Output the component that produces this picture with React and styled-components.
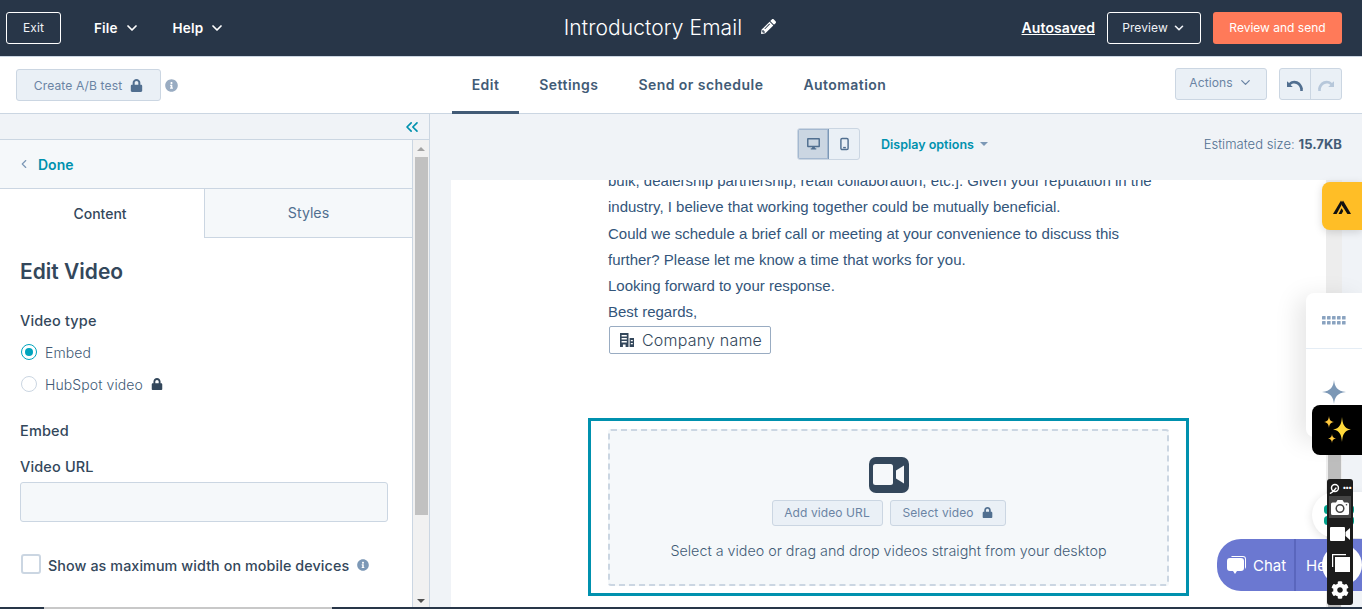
import React from 'react';
import styled, { createGlobalStyle } from 'styled-components';
import { ChevronDown, ChevronLeft, ChevronsLeft } from 'lucide-react';
import { FaLock, FaPencilAlt, FaInfoCircle, FaCog } from 'react-icons/fa';

const GlobalStyle = createGlobalStyle`
  html, body {
    margin: 0;
    height: 100%;
    overflow: hidden;
  }
  body {
    font-family: "Inter", "Open Sans", sans-serif;
    color: #33475b;
    background: #fff;
  }
  * {
    box-sizing: border-box;
  }
`;

const Page = styled.div`
  position: relative;
  width: 1362px;
  height: 609px;
  display: flex;
  flex-direction: column;
  overflow: hidden;
`;

const TopBar = styled.header`
  height: 57px;
  flex: none;
  display: grid;
  grid-template-columns: 1fr auto 1fr;
  align-items: center;
  padding: 0 20px 1px 6px;
  background: #283648;
  border-bottom: 1px solid #cbd6e2;
  color: #fff;
`;

const TopLeft = styled.div`
  display: flex;
  align-items: center;
`;

const TopRight = styled.div`
  display: flex;
  align-items: center;
  justify-content: flex-end;
`;

const OutlineButton = styled.button`
  height: 32px;
  width: ${({ $w }) => $w}px;
  display: flex;
  align-items: center;
  justify-content: center;
  gap: 4px;
  font: 400 12px "Inter", sans-serif;
  letter-spacing: 0.1px;
  color: #f0f3f7;
  background: transparent;
  border: 1px solid #fff;
  border-radius: 3px;
  padding: 0;
`;

const MenuItem = styled.div`
  display: flex;
  align-items: center;
  gap: 6px;
  margin-left: ${({ $ml }) => $ml}px;
  font-size: 13.5px;
  font-weight: 600;
  letter-spacing: 0.15px;
  color: #fff;
`;

const TitleRow = styled.div`
  display: flex;
  align-items: center;
  gap: 19px;
  margin-left: -8px;
  font-size: 21px;
  font-weight: 300;
  letter-spacing: 0.1px;
  color: #fff;
  svg {
    margin-top: -2px;
  }
`;

const Autosaved = styled.span`
  font-size: 14px;
  font-weight: 600;
  letter-spacing: 0.1px;
  text-decoration: underline;
  margin-right: 12px;
`;

const SendButton = styled.button`
  width: 129px;
  height: 32px;
  margin-left: 12px;
  font: 400 12px "Inter", sans-serif;
  color: #fff;
  background: #ff7a59;
  border: none;
  border-radius: 3px;
  padding: 0;
`;

const SubBar = styled.div`
  height: 57px;
  flex: none;
  display: grid;
  grid-template-columns: 1fr auto 1fr;
  padding: 0 20px 0 16px;
  background: #fff;
  border-bottom: 1px solid #cbd6e2;
`;

const SubLeft = styled.div`
  display: flex;
  align-items: center;
  gap: 4px;
`;

const SubRight = styled.div`
  display: flex;
  justify-content: flex-end;
  gap: 12px;
  padding-top: 11px;
`;

const MutedButton = styled.button`
  height: ${({ $h }) => $h || 32}px;
  width: ${({ $w }) => ($w ? `${$w}px` : 'auto')};
  display: flex;
  align-items: center;
  justify-content: center;
  gap: ${({ $gap }) => $gap || 8}px;
  padding: 0 0 ${({ $pb }) => $pb || 0}px;
  font: 400 ${({ $fs }) => $fs || 12}px "Inter", sans-serif;
  letter-spacing: 0.1px;
  color: #6a84a4;
  background: #eaf0f6;
  border: 1px solid #cbd6e2;
  border-radius: 3px;
`;

const Tabs = styled.nav`
  display: flex;
  align-items: stretch;
  gap: 40px;
  margin-bottom: -1px;
`;

const Tab = styled.div`
  display: flex;
  align-items: center;
  padding: 1px ${({ $active }) => ($active ? '20px' : '0')} 0;
  margin: 0 ${({ $active }) => ($active ? '-20px' : '0')};
  font-size: 14px;
  font-weight: 600;
  letter-spacing: 0.45px;
  color: #425b76;
  border-bottom: 3px solid ${({ $active }) => ($active ? '#425b76' : 'transparent')};
`;

const UndoGroup = styled.div`
  display: flex;
  height: 32px;
  width: 63px;
  background: #eaf0f6;
  border: 1px solid #cbd6e2;
  border-radius: 3px;
`;

const UndoCell = styled.div`
  flex: 1;
  display: flex;
  align-items: center;
  justify-content: center;
  padding-top: 3px;
  & + & {
    border-left: 1px solid #cbd6e2;
  }
  svg {
    transform: ${({ $off }) => ($off ? 'scaleX(-1)' : 'none')};
  }
`;

const Main = styled.div`
  flex: 1;
  min-height: 0;
  display: flex;
`;

const Sidebar = styled.aside`
  width: 430px;
  flex: none;
  display: flex;
  flex-direction: column;
  background: #f0f3f7;
  border-right: 1px solid #cbd6e2;
`;

const CollapseRow = styled.div`
  height: 26px;
  flex: none;
  display: flex;
  align-items: center;
  justify-content: flex-end;
  padding-right: 7px;
  color: #0091ae;
  border-bottom: 1px solid #cbd6e2;
`;

const SidebarBody = styled.div`
  flex: 1;
  min-height: 0;
  display: flex;
`;

const Panel = styled.div`
  width: 413px;
  display: flex;
  flex-direction: column;
  background: #fff;
  border-right: 1px solid #cbd6e2;
`;

const DoneRow = styled.div`
  height: 49px;
  flex: none;
  display: flex;
  align-items: center;
  gap: 7px;
  padding-left: 17px;
  font-size: 14px;
  font-weight: 600;
  color: #0091ae;
  background: #f5f8fa;
  border-bottom: 1px solid #cbd6e2;
  svg {
    color: #7c98b6;
  }
`;

const PanelTabs = styled.div`
  height: 49px;
  flex: none;
  display: flex;
`;

const PanelTab = styled.div`
  width: ${({ $active }) => ($active ? '204px' : '208px')};
  display: flex;
  align-items: center;
  justify-content: center;
  padding: 0 ${({ $active }) => ($active ? '4px' : '0')} 1px 0;
  font-size: ${({ $active }) => ($active ? '14px' : '14.2px')};
  font-weight: ${({ $active }) => ($active ? 500 : 400)};
  color: ${({ $active }) => ($active ? '#33475b' : '#516f90')};
  background: ${({ $active }) => ($active ? '#fff' : '#f5f8fa')};
  border-bottom: ${({ $active }) => ($active ? 'none' : '1px solid #cbd6e2')};
  border-left: ${({ $active }) => ($active ? 'none' : '1px solid #cbd6e2')};
`;

const PanelContent = styled.div`
  flex: 1;
  display: flex;
  flex-direction: column;
  padding: 0 24px 0 20px;
`;

const Heading = styled.h2`
  margin: 21px 0 0;
  font-size: 21px;
  line-height: 26px;
  font-weight: 600;
  color: #33475b;
`;

const FieldLabel = styled.div`
  margin-top: ${({ $mt }) => $mt}px;
  font-size: 14.5px;
  line-height: 18px;
  font-weight: 500;
  letter-spacing: 0.15px;
  color: #33475b;
`;

const RadioRow = styled.div`
  display: flex;
  align-items: center;
  height: 16px;
  margin-top: ${({ $mt }) => $mt}px;
  font-size: 14px;
  font-weight: 300;
  letter-spacing: 0.1px;
  color: #425b76;
  svg {
    margin-left: 8px;
  }
`;

const Radio = styled.span`
  width: 16px;
  height: 16px;
  flex: none;
  margin: 0 8px 0 1px;
  border-radius: 50%;
  border: 1px solid ${({ $on }) => ($on ? '#00a4bd' : '#cbd6e2')};
  background: #fff;
  display: flex;
  align-items: center;
  justify-content: center;
  &::after {
    content: '';
    display: ${({ $on }) => ($on ? 'block' : 'none')};
    width: 8px;
    height: 8px;
    border-radius: 50%;
    background: #00a4bd;
  }
`;

const UrlInput = styled.div`
  height: 40px;
  margin-top: 6px;
  background: #f5f8fa;
  border: 1px solid #cbd6e2;
  border-radius: 3px;
`;

const CheckRow = styled.div`
  display: flex;
  align-items: center;
  margin-top: 34px;
  font-size: 14.3px;
  font-weight: 500;
  letter-spacing: 0.1px;
  white-space: nowrap;
  color: #33475b;
`;

const Checkbox = styled.span`
  width: 20px;
  height: 20px;
  flex: none;
  margin: -2px 7px 0 1px;
  background: #fff;
  border: 2px solid #cbd6e2;
  border-radius: 3px;
`;

const InfoDot = styled.span`
  display: inline-flex;
  margin-left: ${({ $ml }) => $ml}px;
  color: ${({ $c }) => $c || '#7c98b6'};
`;

const Scrollbar = styled.div`
  width: 16px;
  flex: none;
  display: flex;
  flex-direction: column;
  align-items: center;
  background: #f1f1f1;
`;

const ScrollArrow = styled.span`
  height: 17px;
  flex: none;
  display: flex;
  align-items: center;
  justify-content: center;
  &::before {
    content: '';
    border-left: 4px solid transparent;
    border-right: 4px solid transparent;
    ${({ $down }) => ($down ? 'border-top' : 'border-bottom')}: 4px solid ${({ $down }) => ($down ? '#505050' : '#a3a3a3')};
  }
`;

const ScrollThumb = styled.div`
  width: 13px;
  height: 358px;
  background: #c1c1c1;
`;

const ScrollGap = styled.div`
  flex: 1;
`;

const Workspace = styled.section`
  flex: 1;
  min-width: 0;
  display: flex;
  flex-direction: column;
  background: #f0f3f7;
`;

const ViewBar = styled.div`
  height: 66px;
  flex: none;
  display: flex;
  align-items: center;
  padding: 0 20px 6px 367px;
`;

const ViewToggle = styled.div`
  display: flex;
  width: 63px;
  height: 32px;
  background: #eaf0f6;
  border: 1px solid #cbd6e2;
  border-radius: 3px;
  overflow: hidden;
`;

const ViewCell = styled.div`
  flex: 1;
  display: flex;
  align-items: center;
  justify-content: center;
  background: ${({ $on }) => ($on ? '#cbd6e2' : 'transparent')};
  border-right: ${({ $on }) => ($on ? '1px solid #7c98b6' : 'none')};
  box-shadow: ${({ $on }) => ($on ? 'inset 0 0 0 1px #a4b8d0' : 'none')};
`;

const DisplayOptions = styled.div`
  display: flex;
  align-items: center;
  gap: 6px;
  margin-left: 21px;
  font-size: 12.5px;
  font-weight: 600;
  color: #0091ae;
  &::after {
    content: '';
    border-left: 4px solid transparent;
    border-right: 4px solid transparent;
    border-top: 4px solid #7c98b6;
  }
`;

const SizeNote = styled.div`
  margin-left: auto;
  font-size: 13px;
  font-weight: 300;
  letter-spacing: 0.05px;
  color: #516f90;
  b {
    font-weight: 700;
    color: #425b76;
  }
`;

const CanvasRow = styled.div`
  flex: 1;
  min-height: 0;
  display: flex;
  padding-left: 21px;
`;

const Canvas = styled.div`
  width: 875px;
  flex: none;
  overflow: hidden;
  background: #fff;
  padding: 0 137px;
`;

const CanvasTrack = styled.div`
  width: 16px;
  flex: none;
  display: flex;
  justify-content: center;
  padding-top: 200px;
  background: #ededed;
`;

const CanvasThumb = styled.div`
  width: 13px;
  height: 100%;
  background: #bdbdbd;
`;

const Letter = styled.div`
  margin-top: -12px;
  padding-left: 20px;
  font: 15px/26.3px "Liberation Sans", Arial, sans-serif;
  white-space: nowrap;
  color: #33557a;
  p {
    margin: 0;
  }
`;

const TokenChip = styled.div`
  width: 162px;
  height: 28px;
  margin-left: 1px;
  display: flex;
  align-items: center;
  gap: 7px;
  padding-left: 9px;
  font-family: "Inter", sans-serif;
  font-size: 16px;
  font-weight: 300;
  letter-spacing: 0.2px;
  color: #33475b;
  background: #fff;
  border: 1px solid #99acc2;
  border-radius: 2px;
`;

const VideoModule = styled.div`
  height: 178px;
  margin-top: 64px;
  padding: 8px 17px;
  background: #fff;
  border: 3px solid #0091ae;
`;

const DropZone = styled.div`
  height: 157px;
  display: flex;
  flex-direction: column;
  align-items: center;
  padding-top: 26px;
  background: #f5f8fa;
  border: 2px dashed #cbd6e2;
  border-radius: 3px;
`;

const DropButtons = styled.div`
  display: flex;
  gap: 7px;
  margin-top: 7px;
`;

const DropHint = styled.div`
  margin-top: 16px;
  font-size: 14.3px;
  font-weight: 300;
  white-space: nowrap;
  color: #425b76;
`;

const Floating = styled.div`
  position: absolute;
  left: ${({ $x }) => $x}px;
  top: ${({ $y }) => $y}px;
  width: ${({ $w }) => $w}px;
  height: ${({ $h }) => $h}px;
`;

const YellowTab = styled(Floating)`
  display: flex;
  align-items: center;
  justify-content: center;
  background: #ffbe26;
  border-radius: 8px 0 0 8px;
  box-shadow: 0 2px 8px rgba(0, 0, 0, 0.15);
`;

const SideTools = styled(Floating)`
  display: flex;
  flex-direction: column;
  background: #fff;
  border-radius: 8px 0 0 8px;
  box-shadow: -8px 4px 24px rgba(0, 0, 0, 0.1);
`;

const ToolCell = styled.div`
  height: ${({ $h }) => $h}px;
  display: flex;
  align-items: ${({ $align }) => $align || 'center'};
  justify-content: center;
  padding-top: ${({ $pt }) => $pt || 0}px;
  border-bottom: ${({ $line }) => ($line ? '1px solid #e5edf5' : 'none')};
`;

const SparkTab = styled(Floating)`
  display: flex;
  align-items: center;
  justify-content: center;
  background: #000;
  border-radius: 8px 0 0 8px;
`;

const RoundBubble = styled(Floating)`
  display: flex;
  align-items: center;
  padding-left: 12px;
  background: #fff;
  border-radius: 24px 0 0 24px;
  box-shadow: 0 2px 10px rgba(0, 0, 0, 0.12);
`;

const ChatPill = styled(Floating)`
  display: flex;
  align-items: center;
  overflow: hidden;
  color: #fff;
  font-size: 15px;
  font-weight: 400;
  background: #6b78d1;
  border-radius: 24px 0 0 24px;
`;

const ChatPart = styled.div`
  height: 100%;
  display: flex;
  align-items: center;
  gap: 6px;
  padding-left: ${({ $pl }) => $pl}px;
  width: ${({ $w }) => $w}px;
  flex: none;
  border-right: ${({ $line }) => ($line ? '2px solid #5a66bd' : 'none')};
`;

const WhiteDisc = styled(Floating)`
  background: #fff;
  border-radius: 50%;
`;

const RecorderBar = styled(Floating)`
  display: flex;
  flex-direction: column;
  align-items: center;
  background: #1c1c1c;
  border-radius: 3px;
  color: #fff;
`;

const RecorderTop = styled.div`
  height: 17px;
  width: 100%;
  flex: none;
  display: flex;
  align-items: center;
  justify-content: center;
  gap: 3px;
  padding-top: 1px;
`;

const Dots = styled.span`
  font-size: 7px;
  line-height: 8px;
  letter-spacing: -0.5px;
  font-weight: 700;
`;

const RecorderCell = styled.div`
  width: 22px;
  height: ${({ $h }) => $h}px;
  flex: none;
  display: flex;
  align-items: center;
  justify-content: center;
  background: ${({ $on }) => ($on ? '#444' : 'transparent')};
`;

const BottomStrip = styled.div`
  position: absolute;
  left: 0;
  bottom: 0;
  width: 100%;
  height: 2px;
  background: #283648;
`;

const BottomThumb = styled.div`
  width: 288px;
  height: 100%;
  margin-left: 44px;
  background: #c8c8c8;
`;

const Lock = ({ size = 12, color = '#516f90' }) => <FaLock size={size} color={color} />;

const UndoArrow = ({ color }) => (
  <svg width="16" height="11" viewBox="0 0 16 11" fill={color}>
    <path d="M0 1.2V7h5.8L3.6 4.9C4.7 4 6 3.5 7.3 3.5c2.9 0 5.1 2.2 6 5.5l2.5-.8C14.7 3.8 11.6.8 7.3.8 5.3.8 3.5 1.6 2.1 3.1z" />
    <rect x="13.2" y="8" width="2.6" height="3" />
  </svg>
);

const ClusterIcon = () => (
  <svg width="26" height="12" viewBox="0 0 26 12" fill="#8aa3c0">
    {[0, 1].flatMap(r => [0, 1, 2, 3, 4].map(c => <rect key={`${r}${c}`} x={1 + c * 5} y={1 + r * 5} width="3.6" height="3.6" rx="0.6" />))}
  </svg>
);

const STAR = 'M12 0C12.8 7 15 11 24 12C15 13 12.8 17 12 24C11.2 17 9 13 0 12C9 11 11.2 7 12 0Z';

const Sparkle = ({ w, h = w, color, x = 0, y = 0 }) => (
  <path transform={`translate(${x} ${y}) scale(${w / 24} ${h / 24})`} fill={color} d={STAR} />
);

const CompanyIcon = () => (
  <svg width="16" height="16" viewBox="0 0 16 16" fill="#33475b">
    <path d="M1 1h8.5v14H6.6v-2.6H3.9V15H1zM2.6 3v1.5h5.2V3zm0 3v1.5h5.2V6zm0 3v1.5h5.2V9z" fillRule="evenodd" />
    <path d="M10.6 6H15v9h-4.4zM11.8 8v1.3h2V8zm0 3v1.3h2V11z" fillRule="evenodd" />
  </svg>
);

const App = () => (
  <>
    <GlobalStyle />
    <Page>
      <TopBar>
        <TopLeft>
          <OutlineButton $w={55}>Exit</OutlineButton>
          <MenuItem $ml={33}>
            File <ChevronDown size={16} strokeWidth={2.6} />
          </MenuItem>
          <MenuItem $ml={33}>
            Help <ChevronDown size={16} strokeWidth={2.6} />
          </MenuItem>
        </TopLeft>
        <TitleRow>
          Introductory Email <FaPencilAlt size={15} />
        </TitleRow>
        <TopRight>
          <Autosaved>Autosaved</Autosaved>
          <OutlineButton $w={94}>
            Preview <ChevronDown size={14} strokeWidth={2.8} />
          </OutlineButton>
          <SendButton>Review and send</SendButton>
        </TopRight>
      </TopBar>

      <SubBar>
        <SubLeft>
          <MutedButton $w={145} $fs={12.1}>
            Create A/B test <Lock size={13} color="#516f90" />
          </MutedButton>
          <InfoDot $ml={0} $c="#99acc2">
            <FaInfoCircle size={13} />
          </InfoDot>
        </SubLeft>
        <Tabs>
          <Tab $active>Edit</Tab>
          <Tab>Settings</Tab>
          <Tab>Send or schedule</Tab>
          <Tab>Automation</Tab>
        </Tabs>
        <SubRight>
          <MutedButton $w={92} $gap={5} $fs={12.1} $pb={3}>
            Actions <ChevronDown size={15} />
          </MutedButton>
          <UndoGroup>
            <UndoCell>
              <UndoArrow color="#516f90" />
            </UndoCell>
            <UndoCell $off>
              <UndoArrow color="#b6c7da" />
            </UndoCell>
          </UndoGroup>
        </SubRight>
      </SubBar>

      <Main>
        <Sidebar>
          <CollapseRow>
            <ChevronsLeft size={20} strokeWidth={2} />
          </CollapseRow>
          <SidebarBody>
            <Panel>
              <DoneRow>
                <ChevronLeft size={14} strokeWidth={2} /> Done
              </DoneRow>
              <PanelTabs>
                <PanelTab $active>Content</PanelTab>
                <PanelTab>Styles</PanelTab>
              </PanelTabs>
              <PanelContent>
                <Heading>Edit Video</Heading>
                <FieldLabel $mt={27}>Video type</FieldLabel>
                <RadioRow $mt={14}>
                  <Radio $on />
                  Embed
                </RadioRow>
                <RadioRow $mt={16}>
                  <Radio />
                  HubSpot video <Lock size={12} color="#33475b" />
                </RadioRow>
                <FieldLabel $mt={30}>Embed</FieldLabel>
                <FieldLabel $mt={18}>Video URL</FieldLabel>
                <UrlInput />
                <CheckRow>
                  <Checkbox />
                  Show as maximum width on mobile devices
                  <InfoDot $ml={8}>
                    <FaInfoCircle size={12} />
                  </InfoDot>
                </CheckRow>
              </PanelContent>
            </Panel>
            <Scrollbar>
              <ScrollArrow />
              <ScrollThumb />
              <ScrollGap />
              <ScrollArrow $down />
            </Scrollbar>
          </SidebarBody>
        </Sidebar>

        <Workspace>
          <ViewBar>
            <ViewToggle>
              <ViewCell $on>
                <svg width="13" height="12" viewBox="0 0 14 13" fill="#516f90">
                  <path d="M1 0h12a1 1 0 0 1 1 1v8a1 1 0 0 1-1 1H8.5v1H10v1.4H4V11h1.5v-1H1a1 1 0 0 1-1-1V1a1 1 0 0 1 1-1zm.6 1.6v6.8h10.8V1.6z" fillRule="evenodd" />
                </svg>
              </ViewCell>
              <ViewCell>
                <svg width="9" height="14" viewBox="0 0 10 14" fill="none">
                  <rect x="1" y="0.8" width="8" height="12.4" rx="1.4" stroke="#516f90" strokeWidth="1.6" />
                  <rect x="3.5" y="10.2" width="3" height="1.6" fill="#516f90" />
                </svg>
              </ViewCell>
            </ViewToggle>
            <DisplayOptions>Display options</DisplayOptions>
            <SizeNote>
              Estimated size: <b>15.7KB</b>
            </SizeNote>
          </ViewBar>
          <CanvasRow>
            <Canvas>
              <Letter>
                <p>bulk, dealership partnership, retail collaboration, etc.]. Given your reputation in the</p>
                <p>industry, I believe that working together could be mutually beneficial.</p>
                <p>Could we schedule a brief call or meeting at your convenience to discuss this</p>
                <p>further? Please let me know a time that works for you.</p>
                <p>Looking forward to your response.</p>
                <p>Best regards,</p>
                <TokenChip>
                  <CompanyIcon /> Company name
                </TokenChip>
              </Letter>
              <VideoModule>
                <DropZone>
                  <svg width="40" height="36" viewBox="0 0 40 36">
                    <rect width="40" height="36" rx="7" fill="#33475b" />
                    <rect x="4" y="7" width="20" height="21" rx="2.5" fill="#f5f8fa" />
                    <path d="M35 8.5v18l-8-5v-8z" fill="#f5f8fa" />
                  </svg>
                  <DropButtons>
                    <MutedButton $w={111} $h={26} $fs={12}>
                      Add video URL
                    </MutedButton>
                    <MutedButton $w={116} $h={26} $fs={12}>
                      Select video <Lock size={11} color="#516f90" />
                    </MutedButton>
                  </DropButtons>
                  <DropHint>Select a video or drag and drop videos straight from your desktop</DropHint>
                </DropZone>
              </VideoModule>
            </Canvas>
            <CanvasTrack>
              <CanvasThumb />
            </CanvasTrack>
          </CanvasRow>
        </Workspace>
      </Main>

      <YellowTab $x={1322} $y={182} $w={40} $h={48}>
        <svg width="18" height="15" viewBox="0 0 18 15" fill="#111">
          <path d="M0 15L8 1.5l1.6 2.6L3.6 15z" />
          <path d="M9 6.5L14.4 15H18L10 1.5 8.6 3.8z" />
          <path d="M5.5 15L8.6 9.2l1.6 2.7-1.6 3.1z" />
        </svg>
      </YellowTab>

      <SideTools $x={1306} $y={293} $w={56} $h={144}>
        <ToolCell $h={56} $line>
          <ClusterIcon />
        </ToolCell>
        <ToolCell $h={88} $align="flex-start" $pt={31}>
          <svg width="24" height="24" viewBox="0 0 24 24">
            <Sparkle w={24} color="#7c98b6" />
          </svg>
        </ToolCell>
      </SideTools>

      <SparkTab $x={1312} $y={405} $w={50} $h={50}>
        <svg width="28" height="28" viewBox="0 0 28 28">
          <Sparkle w={18} h={25} color="#ffd93b" x={10} y={1} />
          <Sparkle w={10} h={12} color="#ffc83d" x={1} y={0} />
          <Sparkle w={8} h={9} color="#ffc83d" x={5} y={18} />
        </svg>
      </SparkTab>

      <RoundBubble $x={1312} $y={492} $w={50} $h={46}>
        <svg width="30" height="20" viewBox="0 0 30 20" fill="#00a38d">
          <rect x="0" y="0" width="8" height="9" rx="3.500" />
          <rect x="0" y="11" width="8" height="9" rx="3.500" />
          <rect x="22" y="0" width="8" height="9" rx="3.500" />
          <rect x="22" y="11" width="8" height="9" rx="3.500" />
        </svg>
      </RoundBubble>
      <ChatPill $x={1217} $y={539} $w={145} $h={52}>
        <ChatPart $pl={10} $w={79} $line>
          <svg width="20" height="20" viewBox="0 0 20 20" fill="#fff">
            <path d="M5 1h11a3 3 0 0 1 3 3v8a3 3 0 0 1-1 2V4a2 2 0 0 0-2-2H4a3 3 0 0 1 1-1z" />
            <path d="M3 3h11a3 3 0 0 1 3 3v7a3 3 0 0 1-3 3h-4l-2 3-2-3H3a3 3 0 0 1-3-3V6a3 3 0 0 1 3-3z" />
          </svg>
          Chat
        </ChatPart>
        <ChatPart $pl={10} $w={60}>
          Help
        </ChatPart>
      </ChatPill>
      <WhiteDisc $x={1322} $y={545} $w={40} $h={40} />

      <RecorderBar $x={1327} $y={479} $w={26} $h={126}>
        <RecorderTop>
          <svg width="11" height="11" viewBox="0 0 12 12" fill="none" stroke="#fff" strokeWidth="1.6">
            <circle cx="6.500" cy="5.500" r="3.800" />
            <path d="M1 11.500C4 10 6 8 8 5" />
          </svg>
          <Dots>•••</Dots>
        </RecorderTop>
        <RecorderCell $on $h={22}>
          <svg width="18" height="15" viewBox="0 0 18 15">
            <path d="M1.5 2.5H5L6.5 0h5L13 2.5h3.5A1.5 1.5 0 0 1 18 4v9.500a1.500 1.500 0 0 1-1.500 1.500h-15A1.500 1.500 0 0 1 0 13.500V4a1.500 1.500 0 0 1 1.500-1.500z" fill="#fff" />
            <circle cx="9" cy="8.500" r="3.800" fill="#fff" stroke="#444" strokeWidth="1.500" />
            <circle cx="15.500" cy="4.800" r="0.800" fill="#444" />
          </svg>
        </RecorderCell>
        <RecorderCell $h={31}>
          <svg width="20" height="14" viewBox="0 0 20 14" fill="#fff">
            <rect width="15" height="14" rx="1" />
            <path d="M15.500 5L20 1v12l-4.500-4z" />
          </svg>
        </RecorderCell>
        <RecorderCell $h={27}>
          <svg width="19" height="19" viewBox="0 0 19 19" fill="#fff">
            <path d="M1 1h14v1.200H2.200V14H1z" />
            <rect x="4" y="4" width="15" height="15" />
          </svg>
        </RecorderCell>
        <RecorderCell $h={27}>
          <FaCog size={18} />
        </RecorderCell>
      </RecorderBar>

      <BottomStrip>
        <BottomThumb />
      </BottomStrip>
    </Page>
  </>
);

export default App;
